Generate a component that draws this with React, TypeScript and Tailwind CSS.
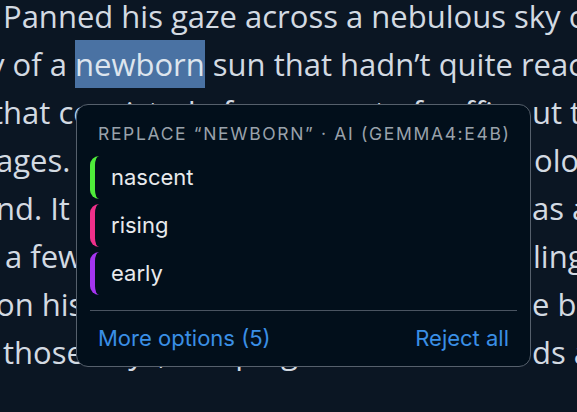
import React from "react";

function Line({
  ml,
  left,
  w,
  right,
}: {
  ml: string;
  left: React.ReactNode;
  w?: string;
  right?: string;
}) {
  return (
    <div className={ml}>
      {w ? <span className={`inline-block align-top ${w}`}>{left}</span> : left}
      {right}
    </div>
  );
}

export default function App() {
  return (
    <div className="relative h-[412px] w-[577px] overflow-hidden bg-[#0b1623]">
      <div
        className="mt-[-8px] whitespace-nowrap text-[31px] leading-[48px] text-[#d3dae2]"
        style={{ fontFamily: '"Open Sans", "Noto Sans", sans-serif' }}
      >
        <Line ml="ml-[3px]" left="Panned his gaze across a nebulous sky of faint blue" />
        <div className="ml-[-11px]">
          y of a{" "}
          <span className="inline-block bg-[#4a72a3] leading-[48px] text-[#dde5ee]">newborn</span>{" "}
          sun that hadn’t quite reached
        </div>
        <Line ml="ml-[-8px]" w="w-[540px]" left="that consisted of some sort of coffin, " right="ut the" />
        <Line ml="ml-[-4px]" w="w-[538px]" left="ages. The sky was an odd mix of " right="olors" />
        <Line ml="ml-[-4px]" w="w-[536px]" left="nd. It drifted in the heavens, " right="as a" />
        <Line ml="ml-[5px]" w="w-[528px]" left="a few of the stars were still twink" right="ling" />
        <Line ml="ml-[-4px]" w="w-[536px]" left="on his back, thinking of th" right="e bonfire" />
        <Line ml="ml-[3px]" w="w-[529px]" left="those days, camping out in the woo" right="ds and" />
      </div>

      <div
        className="absolute left-[76px] top-[104px] w-[455px] rounded-[12px] border border-[#56606c] bg-[#020f1b] px-[13px] pb-[14px] pt-[17px]"
        style={{ fontFamily: 'Inter, "Liberation Sans", sans-serif' }}
      >
        <div className="whitespace-nowrap px-[8px] text-[17.5px] uppercase leading-[24px] tracking-[0.095em] text-[#9aa2ab]">
          Replace “newborn” · AI (gemma4:e4b)
        </div>
        <div className="mt-[10px] flex flex-col gap-[5px]">
          {[
            { t: "nascent", c: "border-[#4fec3a]" },
            { t: "rising", c: "border-[#f0308a]" },
            { t: "early", c: "border-[#a535f0]" },
          ].map((it) => (
            <div
              key={it.t}
              className={`flex h-[43px] items-center rounded-[9px] border-l-[5px] pl-[16px] text-[22px] text-[#e8eaed] ${it.c}`}
            >
              {it.t}
            </div>
          ))}
        </div>
        <div className="mt-[15px] h-px bg-[#4a5461]" />
        <div className="mt-[13px] flex justify-between px-[8px] text-[22px] leading-[28px] text-[#3a8fe6]">
          <span>More options (5)</span>
          <span>Reject all</span>
        </div>
      </div>
    </div>
  );
}
